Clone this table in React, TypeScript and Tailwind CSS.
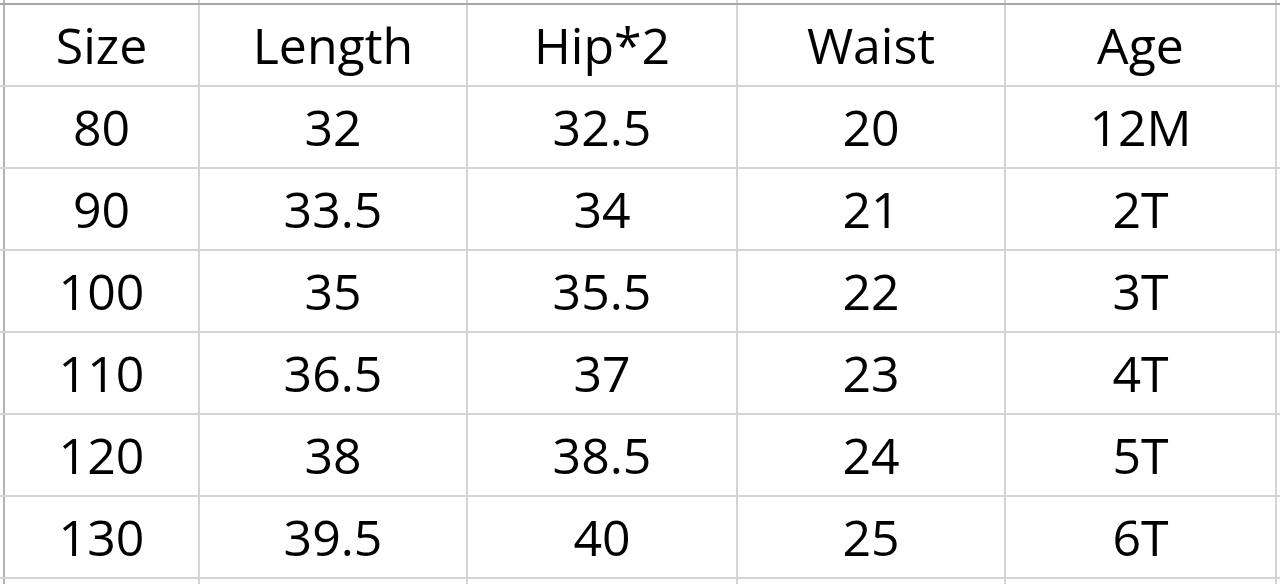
import React from 'react';

const header = ['Size', 'Length', 'Hip*2', 'Waist', 'Age'];
const rows = [
  ['80', '32', '32.5', '20', '12M'],
  ['90', '33.5', '34', '21', '2T'],
  ['100', '35', '35.5', '22', '3T'],
  ['110', '36.5', '37', '23', '4T'],
  ['120', '38', '38.5', '24', '5T'],
  ['130', '39.5', '40', '25', '6T'],
];

// column widths incl. the 2px right border, so grid lines land where the sheet has them
const colW = ['w-[195px]', 'w-[268px]', 'w-[270px]', 'w-[268px]', 'w-[271px]'];

const Row: React.FC<{ cells: string[]; className: string }> = ({ cells, className }) => (
  <div className={`flex shrink-0 border-b-2 ${className}`}>
    <div className="w-[5px] shrink-0 border-r-2 border-[#b4b4b4]" />
    {colW.map((w, i) => (
      <div
        key={i}
        className={`${w} shrink-0 border-r-2 border-[#d4d4d4] flex items-center justify-center`}
      >
        {cells[i] ?? ''}
      </div>
    ))}
    <div className="flex-1" />
  </div>
);

export default function App() {
  return (
    <div
      className="w-[1280px] h-[584px] overflow-hidden bg-white text-black text-[50px] font-medium leading-none flex flex-col"
      style={{ fontFamily: '"Comic Sans MS", "Open Sans", "Noto Sans", sans-serif' }}
    >
      <Row cells={[]} className="h-[5px] border-[#a6a6a6]" />
      <Row cells={header} className="h-[82px] border-[#d4d4d4]" />
      {rows.map((r, i) => (
        <Row key={i} cells={r} className="h-[82px] border-[#d4d4d4]" />
      ))}
      <Row cells={[]} className="h-[20px] border-[#d4d4d4]" />
    </div>
  );
}
